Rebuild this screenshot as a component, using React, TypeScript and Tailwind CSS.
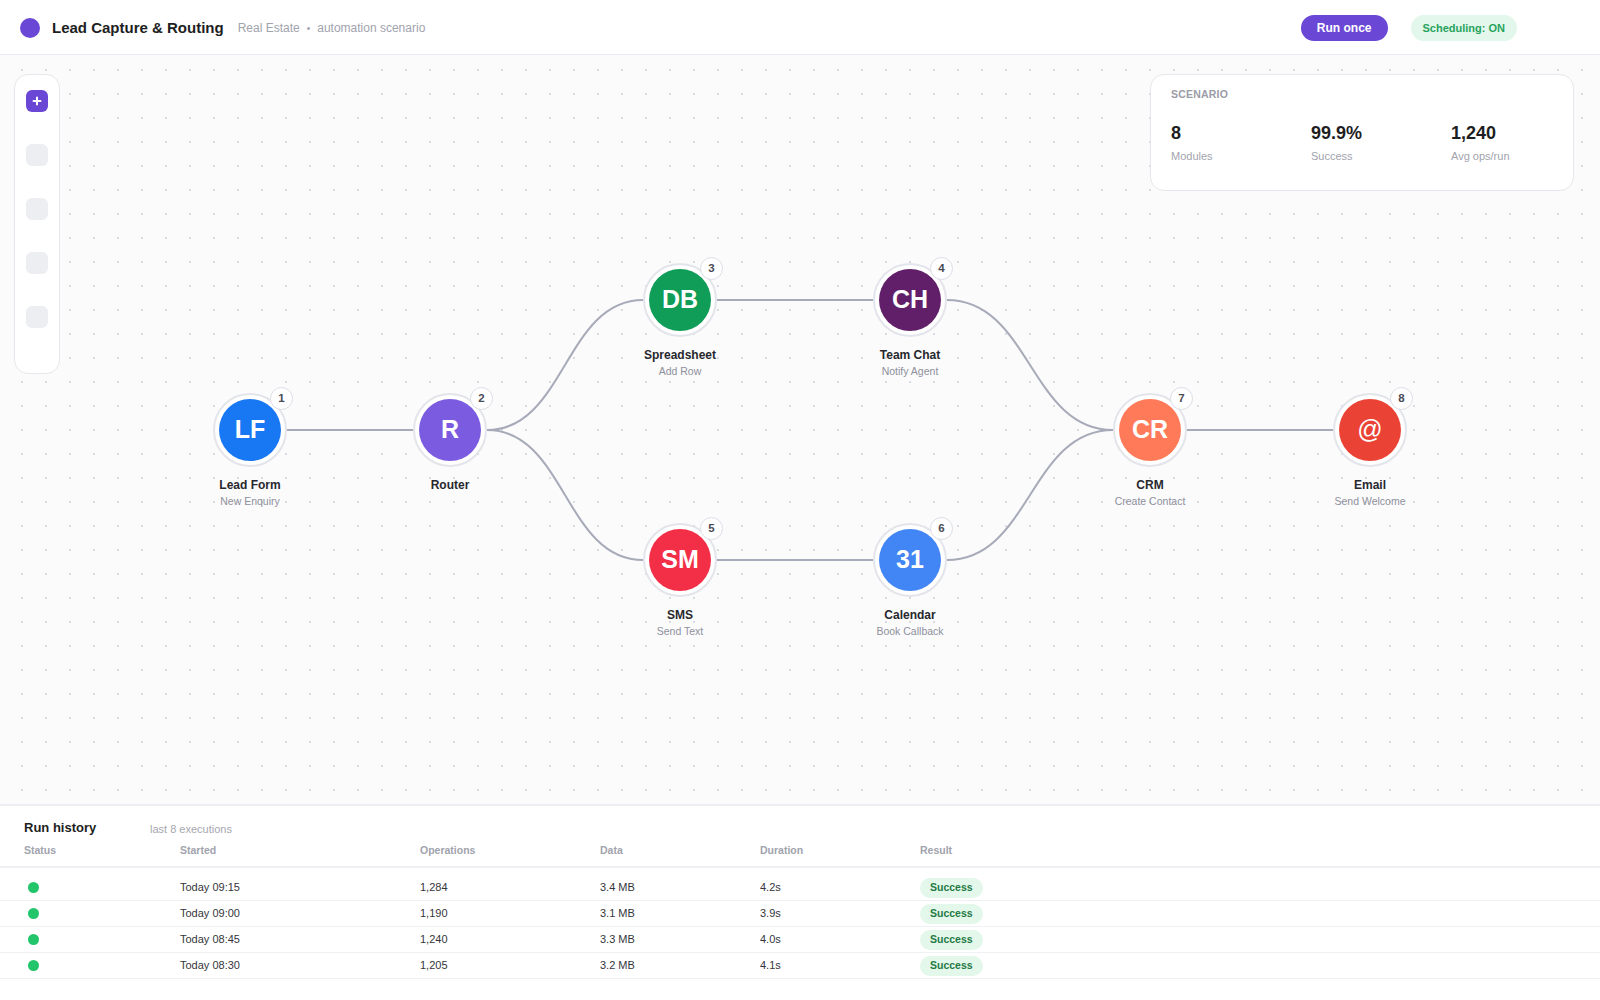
import React from 'react';

type FlowNode = {
  id: number;
  code: string;
  title: string;
  sub?: string;
  x: number;
  y: number;
  color: string;
  light?: boolean;
};

// canvas coordinates (canvas starts under the 55px header)
const nodes: FlowNode[] = [
  { id: 1, code: 'LF', title: 'Lead Form', sub: 'New Enquiry', x: 250, y: 375, color: 'bg-[#1877f2]' },
  { id: 2, code: 'R', title: 'Router', x: 450, y: 375, color: 'bg-[#7b5ce0]' },
  { id: 3, code: 'DB', title: 'Spreadsheet', sub: 'Add Row', x: 680, y: 245, color: 'bg-[#0f9d58]' },
  { id: 4, code: 'CH', title: 'Team Chat', sub: 'Notify Agent', x: 910, y: 245, color: 'bg-[#611f69]' },
  { id: 5, code: 'SM', title: 'SMS', sub: 'Send Text', x: 680, y: 505, color: 'bg-[#f22f46]' },
  { id: 6, code: '31', title: 'Calendar', sub: 'Book Callback', x: 910, y: 505, color: 'bg-[#4285f4]' },
  { id: 7, code: 'CR', title: 'CRM', sub: 'Create Contact', x: 1150, y: 375, color: 'bg-[#ff7a59]' },
  { id: 8, code: '@', title: 'Email', sub: 'Send Welcome', x: 1370, y: 375, color: 'bg-[#ea4335]', light: true },
];

const links: [number, number][] = [
  [1, 2],
  [2, 3],
  [2, 5],
  [3, 4],
  [5, 6],
  [4, 7],
  [6, 7],
  [7, 8],
];

const edgePath = (a: FlowNode, b: FlowNode) => {
  const x1 = a.x + 37;
  const x2 = b.x - 37;
  if (a.y === b.y) return `M${x1} ${a.y} L${x2} ${b.y}`;
  const mx = (x1 + x2) / 2;
  return `M${x1} ${a.y} C${mx} ${a.y} ${mx} ${b.y} ${x2} ${b.y}`;
};

const runs = [
  { started: 'Today 09:15', ops: '1,284', data: '3.4 MB', dur: '4.2s' },
  { started: 'Today 09:00', ops: '1,190', data: '3.1 MB', dur: '3.9s' },
  { started: 'Today 08:45', ops: '1,240', data: '3.3 MB', dur: '4.0s' },
  { started: 'Today 08:30', ops: '1,205', data: '3.2 MB', dur: '4.1s' },
];

const NodeCard: React.FC<{ node: FlowNode }> = ({ node }) => (
  <div
    className="absolute w-[160px] flex flex-col items-center"
    style={{ left: node.x - 80, top: node.y - 37 }}
  >
    <div className="relative w-[74px] h-[74px] rounded-full bg-white border-2 border-[#e3e5eb] p-[4px]">
      <div
        className={`w-full h-full rounded-full ${node.color} flex items-center justify-center text-white text-[25px] ${
          node.light ? 'font-normal' : 'font-bold'
        }`}
      >
        {node.code}
      </div>
      <div className="absolute -top-[8px] -right-[8px] w-[23px] h-[23px] rounded-full bg-white border border-[#dcdee5] flex items-center justify-center text-[11.5px] font-semibold text-[#4a4c55]">
        {node.id}
      </div>
    </div>
    <div className="mt-[11px] text-[12px] font-bold text-[#27282d] leading-[15px]">{node.title}</div>
    {node.sub && <div className="mt-[2px] text-[10.5px] text-[#8e909b] leading-[13px]">{node.sub}</div>}
  </div>
);

const byId = (id: number) => nodes.find((n) => n.id === id)!;

export default function App() {
  return (
    <div className="h-screen w-full flex flex-col bg-white font-['Liberation_Sans',Arial,sans-serif] overflow-hidden">
      {/* Header */}
      <div className="h-[55px] shrink-0 border-b border-[#ebecf1] flex items-center pl-5 pr-[83px] pt-[2px]">
        <div className="w-5 h-5 rounded-full bg-[#6b47d6]" />
        <div className="ml-3 text-[15px] font-bold text-[#1d1e22]">Lead Capture &amp; Routing</div>
        <div className="ml-[14px] text-[12px] text-[#a1a3ad] flex items-center gap-[7px]">
          <span>Real Estate</span>
          <span className="text-[10px]">•</span>
          <span>automation scenario</span>
        </div>
        <div className="flex-1" />
        <button className="h-[26px] px-4 rounded-full bg-[#6b47d6] text-white text-[12px] font-bold">Run once</button>
        <div className="ml-[23px] h-[26px] px-3 rounded-full bg-[#e3f7ec] text-[#27a35c] text-[11px] font-bold flex items-center">
          Scheduling: ON
        </div>
      </div>

      {/* Canvas */}
      <div className="relative flex-1 bg-[#fbfbfc] bg-[radial-gradient(circle,#d9dae2_1px,transparent_1.5px)] bg-[size:24px_24px] bg-[position:10px_3px]">
        {/* Toolbar */}
        <div className="absolute left-[14px] top-[19px] w-[46px] h-[300px] rounded-[14px] border border-[#e6e7ec] bg-white flex flex-col items-center pt-[15px] gap-8">
          <div className="w-[22px] h-[22px] rounded-[6px] bg-[#6b47d6] flex items-center justify-center">
            <svg width="10" height="10" viewBox="0 0 10 10">
              <path d="M5 1.5v7M1.5 5h7" stroke="white" strokeWidth="2" strokeLinecap="round" />
            </svg>
          </div>
          <div className="w-[22px] h-[22px] rounded-[6px] bg-[#eceef2]" />
          <div className="w-[22px] h-[22px] rounded-[6px] bg-[#eceef2]" />
          <div className="w-[22px] h-[22px] rounded-[6px] bg-[#eceef2]" />
          <div className="w-[22px] h-[22px] rounded-[6px] bg-[#eceef2]" />
        </div>

        {/* Scenario stats */}
        <div className="absolute right-[26px] top-[19px] w-[424px] h-[117px] rounded-[14px] border border-[#e6e7ec] bg-white px-[20px] pt-[12px]">
          <div className="text-[10.5px] font-semibold text-[#9a9ca6] tracking-[0.02em]">SCENARIO</div>
          <div className="mt-[19px] grid grid-cols-[140px_140px_1fr]">
            {[
              ['8', 'Modules'],
              ['99.9%', 'Success'],
              ['1,240', 'Avg ops/run'],
            ].map(([v, l]) => (
              <div key={l}>
                <div className="text-[18px] font-bold text-[#1d1e22] leading-[22px]">{v}</div>
                <div className="mt-[4px] text-[11px] text-[#a1a3ad]">{l}</div>
              </div>
            ))}
          </div>
        </div>

        {/* Edges */}
        <svg className="absolute inset-0 w-full h-full pointer-events-none">
          {links.map(([a, b]) => (
            <path key={`${a}-${b}`} d={edgePath(byId(a), byId(b))} fill="none" stroke="#a7aab8" strokeWidth="2" />
          ))}
        </svg>

        {nodes.map((n) => (
          <NodeCard key={n.id} node={n} />
        ))}
      </div>

      {/* Run history */}
      <div className="h-[196px] shrink-0 border-t-2 border-[#eceef3] bg-white">
        <div className="px-6 pt-[11px] h-[33px] flex items-center">
          <div className="text-[13px] font-bold text-[#1d1e22] w-[126px]">Run history</div>
          <div className="text-[11px] text-[#a5a7b0] mt-[2px]">last 8 executions</div>
        </div>
        <div className="grid grid-cols-[156px_240px_180px_160px_160px_1fr] px-6 h-[29px] pt-[4px] items-start text-[10.5px] font-semibold text-[#a1a3ad] border-b-2 border-[#eff0f4]">
          <div>Status</div>
          <div>Started</div>
          <div>Operations</div>
          <div>Data</div>
          <div>Duration</div>
          <div>Result</div>
        </div>
        <div className="pt-[7px]">
          {runs.map((r) => (
            <div
              key={r.started}
              className="grid grid-cols-[156px_240px_180px_160px_160px_1fr] px-6 h-[26px] items-center text-[11px] text-[#35363b] border-b border-[#eff0f4]"
            >
              <div className="pl-1">
                <div className="w-[11px] h-[11px] rounded-full bg-[#22c56a]" />
              </div>
              <div>{r.started}</div>
              <div>{r.ops}</div>
              <div>{r.data}</div>
              <div>{r.dur}</div>
              <div>
                <span className="inline-flex items-center h-[20px] px-[10px] rounded-full bg-[#e3f7ea] text-[#1f7a45] text-[10.5px] font-bold">
                  Success
                </span>
              </div>
            </div>
          ))}
        </div>
      </div>
    </div>
  );
}
